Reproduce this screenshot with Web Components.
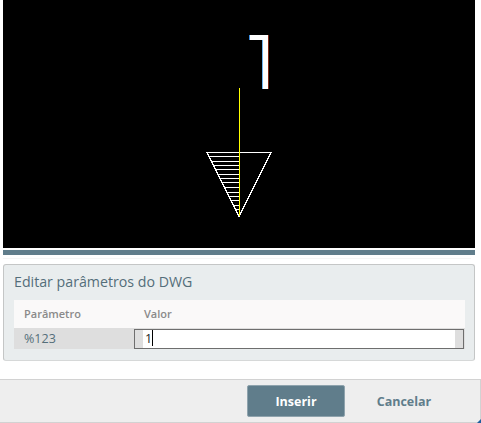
<!DOCTYPE html>
<html lang="pt">
<head>
<meta charset="utf-8">
<title>Editar parâmetros do DWG</title>
<style>
    html, body { margin: 0; background: #fff; }
    body { font-family: "Open Sans", "Noto Sans", sans-serif; }
</style>
</head>
<body>
<dwg-dialog>
    <dwg-preview></dwg-preview>
    <dwg-params title-text="Editar parâmetros do DWG">
        <param-row name="%123" value="1"></param-row>
    </dwg-params>
    <dwg-footer>
        <dwg-button primary>Inserir</dwg-button>
        <dwg-button>Cancelar</dwg-button>
    </dwg-footer>
</dwg-dialog>

<script>
// Fenetre d'insertion DWG

class DwgDialog extends HTMLElement {
    constructor() {
        super();
        this.attachShadow({ mode: 'open' });
    }

    connectedCallback() {
        this.shadowRoot.innerHTML = `
            <style>
                :host {
                    display: flex;
                    flex-direction: column;
                    width: 481px;
                    height: 423px;
                    overflow: hidden;
                }
            </style>
            <slot></slot>
        `;
    }
}

class DwgPreview extends HTMLElement {
    constructor() {
        super();
        this.attachShadow({ mode: 'open' });
    }

    connectedCallback() {
        // hachures de la moitie gauche du triangle
        const ys = [156, 161, 165, 169, 174, 178, 182, 187, 192, 196, 200, 205, 209];
        const hatch = ys.map((y) => {
            const x = 207 + (y - 152) / 2;
            return `<line x1="${x}" y1="${y + 0.5}" x2="239" y2="${y + 0.5}"/>`;
        }).join('');

        this.shadowRoot.innerHTML = `
            <style>
                :host {
                    display: block;
                    margin-left: 3px;
                    width: 472px;
                }
                .canvas {
                    position: relative;
                    height: 248px;
                    background: #000;
                }
                svg {
                    display: block;
                    position: absolute;
                    left: -3px;
                    top: 0;
                }
                .bar {
                    height: 5px;
                    margin-top: 2px;
                    background: #607d8b;
                }
                .rule {
                    height: 1px;
                    margin-top: 3px;
                    background: #f5f5f5;
                    width: 468px;
                }
            </style>
            <div class="canvas">
                <svg width="475" height="248" viewBox="0 0 475 248" shape-rendering="crispEdges">
                    <rect x="249" y="35" width="1" height="5" fill="#3f8fe0"/>
                    <rect x="250" y="35" width="18" height="5" fill="#fff"/>
                    <rect x="262" y="40" width="1" height="49" fill="#6fb4f0"/>
                    <rect x="263" y="40" width="5" height="49" fill="#fff"/>
                    <rect x="268" y="35" width="1" height="54" fill="#7a2a1a"/>
                    <g stroke="#fff" stroke-width="1" fill="none">
                        <path d="M207 152.5H271L239 216.5Z"/>
                        ${hatch}
                    </g>
                    <line x1="239.5" y1="88" x2="239.5" y2="216" stroke="#ff0" stroke-width="1"/>
                </svg>
            </div>
            <div class="bar"></div>
            <div class="rule"></div>
        `;
    }
}

class DwgParams extends HTMLElement {
    constructor() {
        super();
        this.attachShadow({ mode: 'open' });
    }

    connectedCallback() {
        this.shadowRoot.innerHTML = `
            <style>
                :host {
                    display: block;
                    box-sizing: border-box;
                    margin: 5px 0 0 3px;
                    width: 472px;
                    height: 97px;
                    padding: 0 9px 0 10px;
                    background: #e9edee;
                    border: 1px solid #c4c6c6;
                    border-bottom-color: #d6d8d8;
                    border-radius: 3px;
                }
                h2 {
                    margin: 0;
                    height: 35px;
                    font: 400 14.2px/33px "Open Sans", sans-serif;
                    color: #546e7a;
                }
                .head {
                    display: grid;
                    grid-template-columns: 120px 1fr;
                    height: 28px;
                    background: #faf9f9;
                    font: 600 11px/28px "Open Sans", sans-serif;
                    color: #8a8a8a;
                }
                .head span:first-child { padding-left: 10px; }
                .head span:last-child { padding-left: 10px; }
            </style>
            <h2>${this.getAttribute('title-text')}</h2>
            <div class="head"><span>Parâmetro</span><span>Valor</span></div>
            <slot></slot>
        `;
    }
}

class ParamRow extends HTMLElement {
    constructor() {
        super();
        this.attachShadow({ mode: 'open' });
    }

    connectedCallback() {
        this.shadowRoot.innerHTML = `
            <style>
                :host {
                    display: grid;
                    grid-template-columns: 120px 1fr;
                    height: 21px;
                    background: #dedede;
                    font: 400 12.5px/21px "Open Sans", sans-serif;
                    color: #546e7a;
                }
                .name { padding-left: 10px; }
                .field {
                    display: flex;
                    box-sizing: border-box;
                    height: 20px;
                    margin: 1px 1px 0 0;
                    border: 1px solid #6e6e6e;
                    background: #dedede;
                    padding: 0 8px;
                }
                .value {
                    flex: 1;
                    background: #fff;
                    color: #222;
                    line-height: 18px;
                    padding-left: 2px;
                }
                .caret {
                    display: inline-block;
                    width: 1px;
                    height: 16px;
                    vertical-align: -3px;
                    background: #000;
                }
            </style>
            <div class="name">${this.getAttribute('name')}</div>
            <div class="field">
                <div class="value">${this.getAttribute('value')}<span class="caret"></span></div>
            </div>
        `;
    }
}

class DwgFooter extends HTMLElement {
    constructor() {
        super();
        this.attachShadow({ mode: 'open' });
    }

    connectedCallback() {
        this.shadowRoot.innerHTML = `
            <style>
                :host {
                    display: flex;
                    position: relative;
                    box-sizing: border-box;
                    align-items: center;
                    justify-content: flex-end;
                    gap: 10px;
                    margin-top: 18px;
                    height: 44px;
                    padding: 0 27px 0 0;
                    background: #eee;
                    border-top: 1px solid #d2d2d2;
                    border-bottom: 1px solid #d2d2d2;
                    border-right: 1px solid #d2d2d2;
                }
                .corner {
                    position: absolute;
                    right: -1px;
                    bottom: -1px;
                    width: 0;
                    height: 0;
                    border-left: 4px solid transparent;
                    border-bottom: 4px solid #1d5f9e;
                }
            </style>
            <slot></slot>
            <span class="corner"></span>
        `;
    }
}

class DwgButton extends HTMLElement {
    constructor() {
        super();
        this.attachShadow({ mode: 'open' });
    }

    connectedCallback() {
        this.shadowRoot.innerHTML = `
            <style>
                :host {
                    display: flex;
                    box-sizing: border-box;
                    align-items: center;
                    justify-content: center;
                    width: 98px;
                    height: 32px;
                    font: 700 12.5px "Open Sans", sans-serif;
                    color: #607d8b;
                    border-radius: 2px;
                }
                :host([primary]) {
                    background: #607d8b;
                    border: 1px solid #8fa3ad;
                    color: #fff;
                }
            </style>
            <slot></slot>
        `;
    }
}

customElements.define('dwg-dialog', DwgDialog);
customElements.define('dwg-preview', DwgPreview);
customElements.define('dwg-params', DwgParams);
customElements.define('param-row', ParamRow);
customElements.define('dwg-footer', DwgFooter);
customElements.define('dwg-button', DwgButton);
</script>
</body>
</html>
